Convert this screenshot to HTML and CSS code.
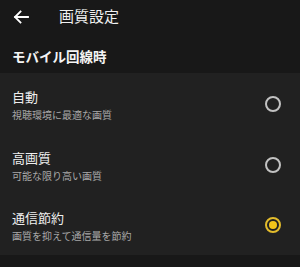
FILE: index.html
```html
<!DOCTYPE html>
<html lang="ja">
<head>
<meta charset="utf-8">
<link rel="stylesheet" href="styles.css">
</head>
<body>
<div class="page">
  <header class="top">
    <div class="bar">
      <svg class="back" width="16" height="14" viewBox="0 0 16 14"><path d="M15 7H2M7.5 1.5L2 7l5.5 5.5" fill="none" stroke="#fff" stroke-width="1.8" stroke-linecap="square"/></svg>
      <h1 class="title">画質設定</h1>
    </div>
    <h2 class="section">モバイル回線時</h2>
  </header>
  <ul class="list">
    <li class="item">
      <div class="text"><div class="name">自動</div><div class="desc">視聴環境に最適な画質</div></div>
      <span class="radio"></span>
    </li>
    <li class="item">
      <div class="text"><div class="name">高画質</div><div class="desc">可能な限り高い画質</div></div>
      <span class="radio"></span>
    </li>
    <li class="item">
      <div class="text"><div class="name">通信節約</div><div class="desc">画質を抑えて通信量を節約</div></div>
      <span class="radio on"></span>
    </li>
  </ul>
  <div class="foot"></div>
</div>
</body>
</html>
```
FILE: styles.css
```css
html, body { margin: 0; padding: 0; }
body { background: #181818; font-family: "Noto Sans CJK JP", "Noto Sans", sans-serif; color: #fff; }
.page { width: 300px; height: 267px; display: flex; flex-direction: column; }
.top { background: #181818; height: 73px; box-sizing: border-box; }
.bar { height: 32px; display: flex; align-items: center; padding-left: 13px; }
.back { display: block; margin-top: 1px; }
.title { margin: 0 0 0 30px; font-size: 15px; font-weight: 400; line-height: 20px; color: #f0f0f0; }
.section { margin: 14px 0 0 12px; font-size: 13.5px; font-weight: 700; line-height: 20px; color: #f4f4f4; }
.list { list-style: none; margin: 0; padding: 0; background: #212121; }
.item { height: 60.7px; display: flex; align-items: center; justify-content: space-between; padding: 0 19px 0 12px; box-sizing: border-box; }
.text { padding-top: 3px; }
.name { font-size: 13px; line-height: 18px; color: #eeeeee; }
.desc { font-size: 10px; line-height: 14px; color: #a8a8a8; margin-top: 2px; }
.radio { width: 16px; height: 16px; box-sizing: border-box; border: 2px solid #c2c2c2; border-radius: 50%; display: flex; align-items: center; justify-content: center; margin-top: 1px; }
.radio.on { border-color: #e3bc2c; }
.radio.on::after { content: ""; width: 8px; height: 8px; border-radius: 50%; background: #f2c41a; }
.foot { flex: 1; background: #181818; }
```
